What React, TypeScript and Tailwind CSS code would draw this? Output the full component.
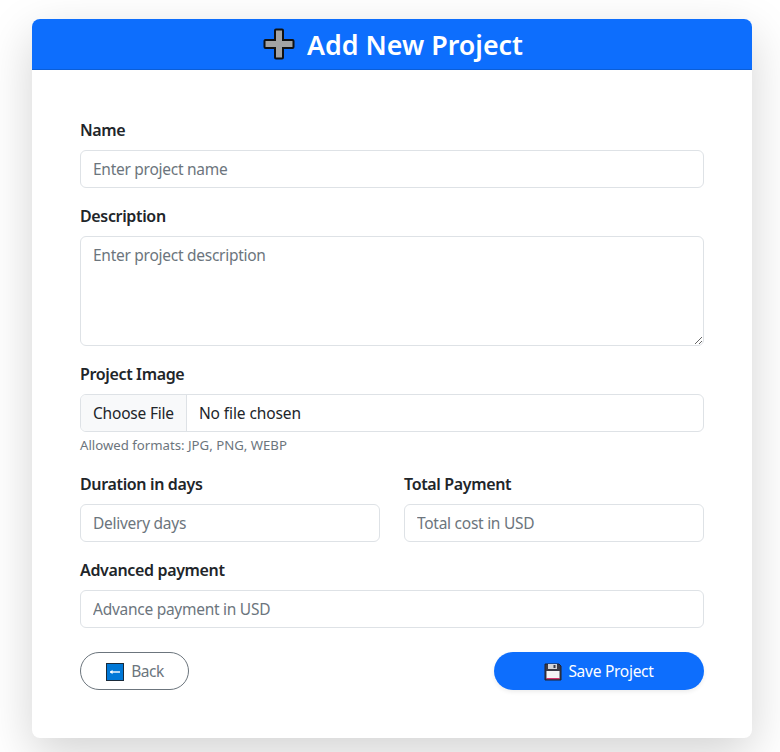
import type {FC} from 'react';

const inputClass =
  'block h-[38px] w-full rounded-[6px] border border-[#dee2e6] bg-white px-3 text-[15.5px] tracking-[-0.27px] text-[#212529] placeholder:text-[#6c757d] outline-none';
const labelClass = 'mb-2 block text-[16px] leading-6 font-semibold tracking-[-0.35px] text-[#212529]';

const PlusIcon: FC = () => (
  <svg width="32" height="32" viewBox="0 0 32 32" className="shrink-0">
    <path
      d="M13 1.5h6a1 1 0 0 1 1 1V12h9.500a1 1 0 0 1 1 1v6a1 1 0 0 1-1 1H20v9.500a1 1 0 0 1-1 1h-6a1 1 0 0 1-1-1V20H2.500a1 1 0 0 1-1-1v-6a1 1 0 0 1 1-1H12V2.500a1 1 0 0 1 1-1z"
      fill="#a3a3a3"
      stroke="#111"
      strokeWidth="2"
    />
  </svg>
);

const BackIcon: FC = () => (
  <svg width="18" height="18" viewBox="0 0 18 18" className="shrink-0">
    <rect x="0.5" y="0.5" width="17" height="17" fill="#0078d7" stroke="#1a2a3a" />
    <path d="M4 9h10" stroke="#fff" strokeWidth="1.4" />
    <path d="M6.500 6.800 4 9l2.500 2.200z" fill="#fff" />
  </svg>
);

const SaveIcon: FC = () => (
  <svg width="18" height="18" viewBox="0 0 18 18" className="shrink-0">
    <path d="M1 1h14l2 2v14H1z" fill="#3a3a46" stroke="#20202c" strokeLinejoin="round" />
    <rect x="4" y="1" width="9" height="5" fill="#d4d4d8" />
    <rect x="9.500" y="2" width="2" height="3" fill="#3a3a46" />
    <rect x="2.500" y="8" width="13" height="7.500" fill="#f4f4f6" />
    <rect x="2.500" y="15" width="13" height="1.200" fill="#d6336c" />
  </svg>
);

const App: FC = () => {
  return (
    <div className="h-[752px] overflow-hidden bg-white pt-[19px] pr-[28px] pl-[32px] font-['Noto_Sans',sans-serif]">
      <div className="rounded-[8px] bg-white shadow-[0_16px_48px_rgba(0,0,0,0.175)]">
        <div className="flex h-[51px] items-center justify-center gap-[12px] rounded-t-[8px] border-b border-[#0b5ed7] bg-[#0d6efd] pl-[2px] text-white">
          <PlusIcon />
          <h1 className="pt-[2px] text-[26.8px] leading-none font-semibold">Add New Project</h1>
        </div>
        <form className="flex flex-col p-12">
          <label className={labelClass}>Name</label>
          <input className={`${inputClass} mb-4`} placeholder="Enter project name" />

          <label className={labelClass}>Description</label>
          <textarea
            className="mb-4 block h-[110px] w-full rounded-[6px] border border-[#dee2e6] bg-white px-3 py-[6px] text-[15.5px] leading-6 tracking-[-0.27px] text-[#212529] outline-none placeholder:text-[#6c757d]"
            placeholder="Enter project description"
          />

          <label className={labelClass}>Project Image</label>
          <input
            type="file"
            className="block h-[38px] w-full rounded-[6px] border border-[#dee2e6] bg-white text-[15.5px] leading-[36px] tracking-[-0.1px] text-[#212529] file:mr-3 file:h-full file:border-0 file:border-r file:border-solid file:border-[#dee2e6] file:bg-[#f8f9fa] file:px-3 file:text-[15.5px] file:font-normal file:tracking-[-0.2px] file:text-[#212529]"
          />
          <small className="mt-1 mb-4 block h-[20px] text-[13.2px] leading-[18px] text-[#6c757d]">
            Allowed formats: JPG, PNG, WEBP
          </small>

          <div className="mb-4 grid grid-cols-2 gap-6">
            <div>
              <label className={labelClass}>Duration in days</label>
              <input className={inputClass} placeholder="Delivery days" />
            </div>
            <div>
              <label className={labelClass}>Total Payment</label>
              <input className={inputClass} placeholder="Total cost in USD" />
            </div>
          </div>

          <label className={labelClass}>Advanced payment</label>
          <input className={inputClass} placeholder="Advance payment in USD" />

          <div className="mt-6 flex items-center justify-between">
            <button
              type="button"
              className="flex h-[38px] w-[109px] items-center justify-center gap-[7px] rounded-full border border-[#6c757d] bg-white pt-[1px] pl-[1px] text-[15.5px] tracking-[-0.5px] text-[#6c757d]"
            >
              <BackIcon />
              Back
            </button>
            <button
              type="button"
              className="flex h-[38px] w-[210px] items-center justify-center gap-[6px] rounded-full bg-[#0d6efd] pt-[1px] text-[15.5px] tracking-[-0.27px] text-white shadow-[0_2px_4px_rgba(0,0,0,0.075)]"
            >
              <SaveIcon />
              Save Project
            </button>
          </div>
        </form>
      </div>
    </div>
  );
};

export default App;
